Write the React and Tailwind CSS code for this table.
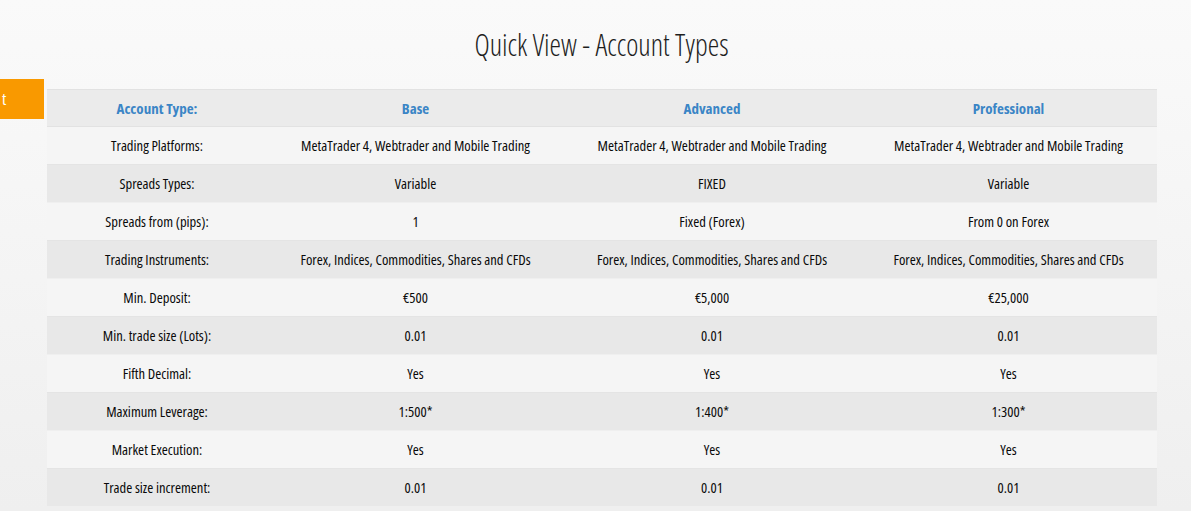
import React from "react";

const rows = [
  ["Trading Platforms:", "MetaTrader 4, Webtrader and Mobile Trading", "MetaTrader 4, Webtrader and Mobile Trading", "MetaTrader 4, Webtrader and Mobile Trading"],
  ["Spreads Types:", "Variable", "FIXED", "Variable"],
  ["Spreads from (pips):", "1", "Fixed (Forex)", "From 0 on Forex"],
  ["Trading Instruments:", "Forex, Indices, Commodities, Shares and CFDs", "Forex, Indices, Commodities, Shares and CFDs", "Forex, Indices, Commodities, Shares and CFDs"],
  ["Min. Deposit:", "€500", "€5,000", "€25,000"],
  ["Min. trade size (Lots):", "0.01", "0.01", "0.01"],
  ["Fifth Decimal:", "Yes", "Yes", "Yes"],
  ["Maximum Leverage:", "1:500*", "1:400*", "1:300*"],
  ["Market Execution:", "Yes", "Yes", "Yes"],
  ["Trade size increment:", "0.01", "0.01", "0.01"],
];

export default function App() {
  return (
    <div className="w-[1191px] h-[511px] overflow-hidden bg-gradient-to-b from-[#fafafa] to-[#efefef] text-[#0a0a0a] font-['Open_Sans',sans-serif] font-stretch-condensed">
      <div className="h-[89px] flex justify-center">
        <h1 className="mt-[25px] pl-[12px] text-[29px] leading-[40px] font-light text-[#1e1e1e] scale-y-[1.08]">
          Quick View - Account Types
        </h1>
      </div>
      <div className="flex">
        <div className="w-[47px] shrink-0">
          <div className="-mt-[10px] w-[44px] h-[40px] bg-[#f99900] text-white text-[17px] leading-[40px] pl-[2px]">
            t
          </div>
        </div>
        <div className="w-[1110px] shrink-0">
          <div className="grid grid-cols-[220px_297px_296px_297px] h-[38px] items-center bg-[#ebebeb] border-t border-b border-[#e2e2e2] text-[#3a85c6] font-bold text-[15px] text-center">
            <div>Account Type:</div>
            <div>Base</div>
            <div>Advanced</div>
            <div>Professional</div>
          </div>
          {rows.map((r, i) => (
            <div
              key={i}
              className={
                "grid grid-cols-[220px_297px_296px_297px] h-[38px] items-center border-b text-[14.6px] font-medium text-center whitespace-nowrap " +
                (i % 2 === 0 ? "bg-[#f5f5f5] border-[#e4e4e4]" : "bg-[#e8e8e8] border-[#efefef]")
              }
            >
              {r.map((c, j) => (
                <div key={j}>{c}</div>
              ))}
            </div>
          ))}
        </div>
      </div>
    </div>
  );
}
